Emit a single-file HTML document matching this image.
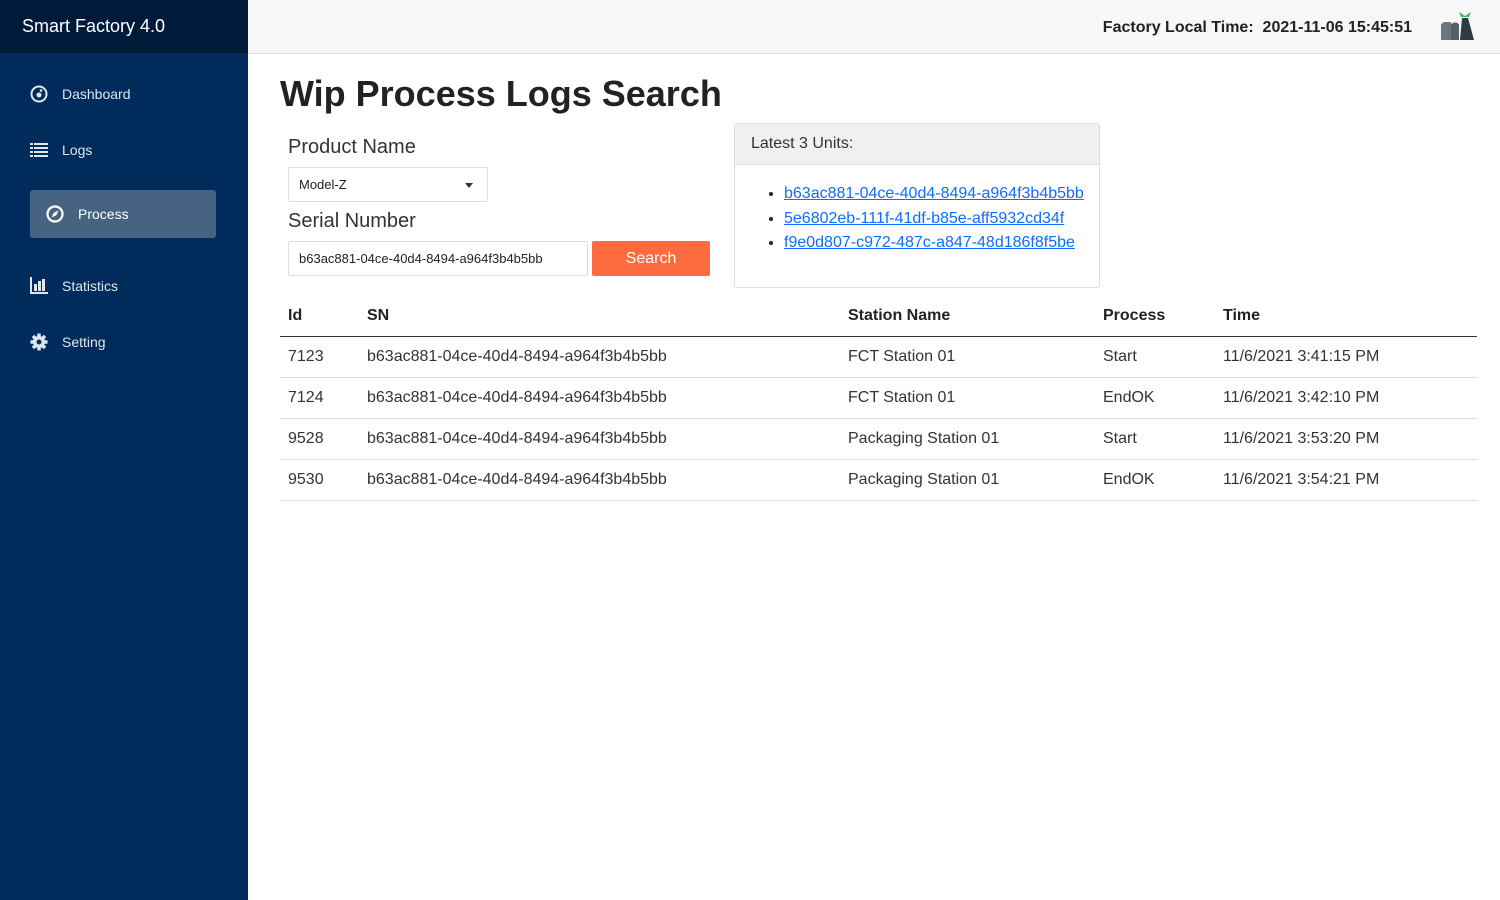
<!DOCTYPE html>
<html><head><meta charset="utf-8"><style>
*{box-sizing:border-box;margin:0;padding:0}
body{width:1500px;height:900px;font-family:"Liberation Sans",Arial,sans-serif;background:#fff;position:relative;overflow:hidden;color:#212529}
.side{position:absolute;left:0;top:0;width:248px;height:900px;background:#002b5a}
.brand{height:53px;background:#001b3a;color:#fff;font-size:18px;padding:16px 22px}
.nav{position:absolute;left:30px;color:#dfe6ee;font-size:14px;display:flex;align-items:center}
.nav svg{margin-right:14px}
.active{left:30px;width:186px;height:48px;background:#466482;border-radius:3px;padding-left:16px;color:#fff}
.top{position:absolute;left:248px;top:0;right:0;height:54px;background:#f7f7f7;border-bottom:1px solid #ddd}
.time{position:absolute;right:88px;top:19px;font-size:16px;font-weight:bold;color:#222}
h1{position:absolute;left:280px;top:73px;font-size:36px;font-weight:bold;color:#222}
.lbl{position:absolute;left:288px;font-size:20px;color:#333}
.inp{position:absolute;left:288px;border:1px solid #ddd;border-radius:2px;font-size:13px;padding-left:10px;display:flex;align-items:center;color:#222}
.btn{position:absolute;left:592px;top:241px;width:118px;height:35px;background:#fd6b3e;color:#fff;font-size:16px;display:flex;align-items:center;justify-content:center;border-radius:2px}
.card{position:absolute;left:734px;top:123px;width:366px;height:165px;border:1px solid #ddd;border-radius:3px}
.card .h{height:41px;background:#f0f0f0;border-bottom:1px solid #ddd;padding:11px 16px;font-size:16px;color:#333}
.card ul{padding:17px 0 0 49px;font-size:16px;line-height:24.5px}
.card a{color:#0d6efd;text-decoration:underline}
table{position:absolute;left:280px;top:296px;width:1197px;border-collapse:collapse;font-size:16px;color:#333}
th{text-align:left;font-weight:bold;height:40px;border-bottom:1.5px solid #333;padding-left:8px;color:#222}
td{height:41px;border-bottom:1px solid #ddd;padding-left:8px}
</style></head><body>
<div class="side">
<div class="brand">Smart Factory 4.0</div>
<div class="nav" style="top:85px"><svg width="18" height="18" viewBox="0 0 18 18"><circle cx="9" cy="9" r="7.5" fill="none" stroke="#dfe6ee" stroke-width="2"/><circle cx="9" cy="10" r="2.5" fill="#dfe6ee"/><circle cx="11" cy="5.5" r="1.3" fill="#dfe6ee"/></svg>Dashboard</div>
<div class="nav" style="top:142px"><svg width="18" height="16" viewBox="0 0 18 16"><g fill="#dfe6ee"><rect x="0" y="1" width="3" height="2"/><rect x="4" y="1" width="14" height="2"/><rect x="0" y="5" width="3" height="2"/><rect x="4" y="5" width="14" height="2"/><rect x="0" y="9" width="3" height="2"/><rect x="4" y="9" width="14" height="2"/><rect x="0" y="13" width="3" height="2"/><rect x="4" y="13" width="14" height="2"/></g></svg>Logs</div>
<div class="nav active" style="top:190px"><svg width="18" height="18" viewBox="0 0 18 18"><circle cx="9" cy="9" r="7.5" fill="none" stroke="#fff" stroke-width="2.2"/><path d="M12.5 5.5L10.3 10.3 5.5 12.5 7.7 7.7Z" fill="#fff"/></svg>Process</div>
<div class="nav" style="top:277px"><svg width="18" height="17" viewBox="0 0 18 17"><g fill="#dfe6ee"><rect x="0" y="0" width="2" height="17"/><rect x="0" y="15" width="18" height="2"/><rect x="4" y="7" width="3" height="7"/><rect x="8" y="4" width="3" height="10"/><rect x="12" y="2" width="3" height="12"/></g></svg>Statistics</div>
<div class="nav" style="top:333px"><svg width="18" height="18" viewBox="0 0 18 18"><circle cx="9" cy="9" r="6" fill="#dfe6ee"/><g stroke="#dfe6ee" stroke-width="3.5"><line x1="9" y1="0.5" x2="9" y2="17.5"/><line x1="0.5" y1="9" x2="17.5" y2="9"/><line x1="3" y1="3" x2="15" y2="15"/><line x1="15" y1="3" x2="3" y2="15"/></g><circle cx="9" cy="9" r="2.5" fill="#002b5a"/></svg>Setting</div>
</div>
<div class="top"><div class="time">Factory Local Time:&nbsp; 2021-11-06 15:45:51</div>
<svg style="position:absolute;right:25px;top:10px" width="36" height="30" viewBox="0 0 36 30"><path d="M20 2l6 4 6-4-2 5h-8z" fill="#3cb85c"/><path d="M2 30V16q0-4 5-4h5v18z" fill="#6b7680"/><path d="M12 30V14q4-3 8 0v16z" fill="#555f68"/><path d="M21 30l2-22h6l6 22z" fill="#2f3a44"/></svg></div>
<h1>Wip Process Logs Search</h1>
<div class="lbl" style="top:136px">Product Name</div>
<div class="inp" style="top:167px;width:200px;height:35px">Model-Z<span style="position:absolute;right:14px;top:15px;border:4px solid transparent;border-top:5px solid #333"></span></div>
<div class="lbl" style="top:210px">Serial Number</div>
<div class="inp" style="top:241px;width:300px;height:35px">b63ac881-04ce-40d4-8494-a964f3b4b5bb</div>
<div class="btn">Search</div>
<div class="card"><div class="h">Latest 3 Units:</div><ul>
<li><a>b63ac881-04ce-40d4-8494-a964f3b4b5bb</a></li>
<li><a>5e6802eb-111f-41df-b85e-aff5932cd34f</a></li>
<li><a>f9e0d807-c972-487c-a847-48d186f8f5be</a></li></ul></div>
<table>
<tr><th style="width:79px">Id</th><th style="width:481px">SN</th><th style="width:255px">Station Name</th><th style="width:120px">Process</th><th>Time</th></tr>
<tr><td>7123</td><td>b63ac881-04ce-40d4-8494-a964f3b4b5bb</td><td>FCT Station 01</td><td>Start</td><td>11/6/2021 3:41:15 PM</td></tr>
<tr><td>7124</td><td>b63ac881-04ce-40d4-8494-a964f3b4b5bb</td><td>FCT Station 01</td><td>EndOK</td><td>11/6/2021 3:42:10 PM</td></tr>
<tr><td>9528</td><td>b63ac881-04ce-40d4-8494-a964f3b4b5bb</td><td>Packaging Station 01</td><td>Start</td><td>11/6/2021 3:53:20 PM</td></tr>
<tr><td>9530</td><td>b63ac881-04ce-40d4-8494-a964f3b4b5bb</td><td>Packaging Station 01</td><td>EndOK</td><td>11/6/2021 3:54:21 PM</td></tr>
</table>
</body></html>
